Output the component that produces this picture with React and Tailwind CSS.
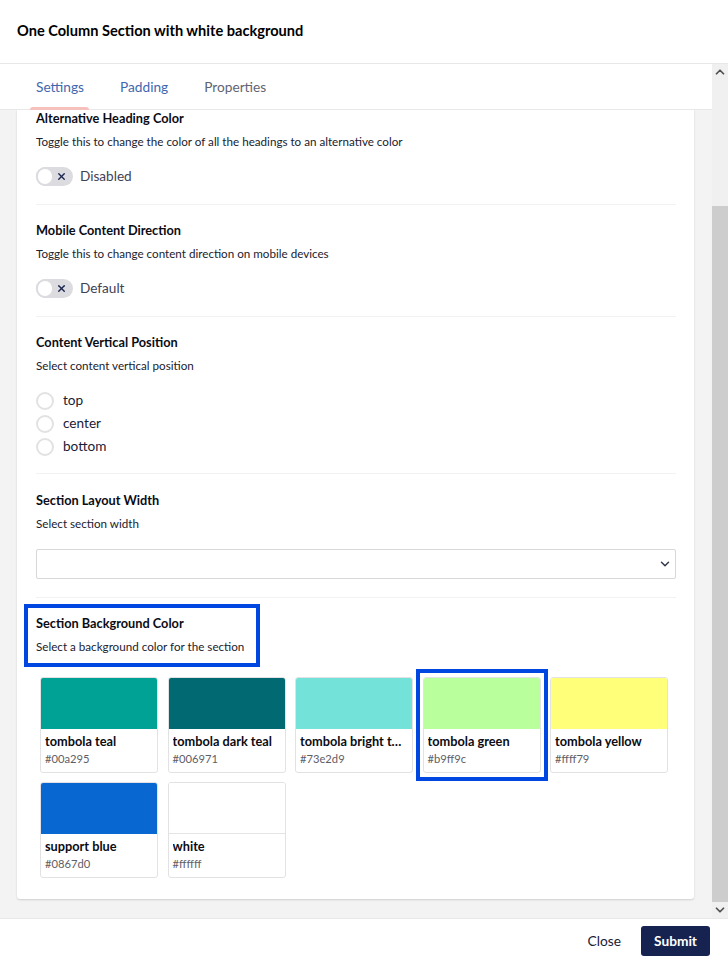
import { ChevronUp, ChevronDown, X } from "lucide-react";

const colors = [
  { name: "tombola teal", hex: "#00a295", swatch: "bg-[#00a295]" },
  { name: "tombola dark teal", hex: "#006971", swatch: "bg-[#006971]" },
  { name: "tombola bright teal", hex: "#73e2d9", swatch: "bg-[#73e2d9]" },
  { name: "tombola green", hex: "#b9ff9c", swatch: "bg-[#b9ff9c]", selected: true },
  { name: "tombola yellow", hex: "#ffff79", swatch: "bg-[#ffff79]" },
  { name: "support blue", hex: "#0867d0", swatch: "bg-[#0867d0]" },
  { name: "white", hex: "#ffffff", swatch: "bg-white border-b border-[#e4e4e7]" },
];

const Toggle = ({ label }) => (
  <div className="flex items-center h-[18px] mt-[16px]">
    <div className="w-[37px] h-[19px] rounded-full bg-[#dcdce0] relative flex items-center justify-end pr-[6px]">
      <div className="absolute left-0 top-0 w-[18px] h-[19px] rounded-full bg-white border-2 border-[#dcdce0]"></div>
      <X size={11} strokeWidth={3} className="text-[#1a2550]" />
    </div>
    <span className="ml-[7px] text-[13.6px] text-[#3f4254]">{label}</span>
  </div>
);

const Heading = ({ title, text }) => (
  <>
    <h3 className="text-[12.75px] leading-[18px] font-bold text-[#0b0c14]">{title}</h3>
    <p className="mt-[6px] text-[11.65px] leading-[18px] text-[#20222e]">{text}</p>
  </>
);

const Radio = ({ label }) => (
  <div className="flex items-center h-[23px]">
    <div className="w-[18px] h-[18px] rounded-full border-2 border-[#e2e2e2] bg-white"></div>
    <span className="ml-[9px] text-[13.6px] text-[#1a2036]">{label}</span>
  </div>
);

const ColorCard = ({ color }) => (
  <div className="relative h-[96px]">
    <div className="h-full rounded-[3px] border border-[#e2e2e4] overflow-hidden bg-white">
      <div className={`h-[51px] ${color.swatch}`}></div>
      <div className="px-[4px] pt-[4px]">
        <div className="text-[12.75px] leading-[17px] font-bold text-[#0b0c14] truncate">{color.name}</div>
        <div className="text-[11.2px] leading-[17px] text-[#5e5e66]">{color.hex}</div>
      </div>
    </div>
    {color.selected && <div className="absolute -inset-x-[7px] -top-[8px] -bottom-[8px] border-4 border-[#0046e0]"></div>}
  </div>
);

export default function App() {
  return (
    <div className="w-[728px] h-[963px] bg-white flex flex-col overflow-hidden font-['Lato','Liberation_Sans',sans-serif]">
      <div className="h-[64px] border-b border-[#e8e8e8] flex items-center px-[17px] pb-[2px] shrink-0">
        <h1 className="text-[14.6px] font-bold text-black">One Column Section with white background</h1>
      </div>

      <div className="flex flex-1 min-h-0">
        <div className="flex-1 min-w-0 flex flex-col">
          <div className="h-[46px] border-b border-[#e8e8e8] flex pl-[30px] shrink-0 text-[13.7px]">
            <div className="relative px-[6px] pt-[13px] w-[59px] text-[#3f68b0]">
              Settings
              <div className="absolute left-0 right-0 bottom-[-1px] h-[3px] rounded-t-[3px] bg-[#f6c0bc]"></div>
            </div>
            <div className="ml-[31px] pt-[13px] text-[#3f68b0]">Padding</div>
            <div className="ml-[36px] pt-[13px] text-[#5f6472]">Properties</div>
          </div>

          <div className="flex-1 min-h-0 bg-[#f4f3f3] pl-[17px] pr-[18px] overflow-hidden">
            <div className="bg-white h-[790px] rounded-b-[3px] shadow-[0_1px_2px_rgba(0,0,0,0.15)] pl-[19px] pr-[18px]">
              <div className="-mt-[1px] h-[96px] border-b border-[#f2f2f2]">
                <Heading title="Alternative Heading Color" text="Toggle this to change the color of all the headings to an alternative color" />
                <Toggle label="Disabled" />
              </div>
              <div className="pt-[16px] h-[112px] border-b border-[#f2f2f2]">
                <Heading title="Mobile Content Direction" text="Toggle this to change content direction on mobile devices" />
                <Toggle label="Default" />
              </div>
              <div className="pt-[16px] h-[157px] border-b border-[#f2f2f2]">
                <Heading title="Content Vertical Position" text="Select content vertical position" />
                <div className="mt-[14px]">
                  <Radio label="top" />
                  <Radio label="center" />
                  <Radio label="bottom" />
                </div>
              </div>
              <div className="pt-[17px] h-[124px] border-b border-[#f2f2f2]">
                <Heading title="Section Layout Width" text="Select section width" />
                <div className="mt-[16px] h-[30px] border border-[#d8d8d8] rounded-[2px] flex items-center justify-end pr-[3px]">
                  <ChevronDown size={14} strokeWidth={2.5} className="text-[#33384a]" />
                </div>
              </div>
              <div className="mt-[6px] -ml-[12px] w-[236px] h-[63px] border-4 border-[#0046e0] pl-[8px] pt-[6px]">
                <Heading title="Section Background Color" text="Select a background color for the section" />
              </div>
              <div className="mt-[10px] ml-[4px] w-[628px] grid grid-cols-5 gap-x-[9.5px] gap-y-[9px]">
                {colors.map((color) => (
                  <ColorCard key={color.name} color={color} />
                ))}
              </div>
            </div>
          </div>
        </div>

        <div className="w-[16px] bg-[#f0f0f0] flex flex-col items-center shrink-0">
          <ChevronUp size={14} strokeWidth={3} className="text-[#505050] h-[16px] shrink-0" />
          <div className="mt-[126px] h-[697px] w-full bg-[#cdcdcd]"></div>
          <ChevronDown size={14} strokeWidth={3} className="text-[#505050] h-[16px] shrink-0" />
        </div>
      </div>

      <div className="h-[45px] border-t border-[#e8e8e8] flex items-center justify-end pr-[18px] shrink-0">
        <span className="text-[13.75px] text-[#1a2036] mr-[20px]">Close</span>
        <button className="w-[69px] h-[30px] rounded-[3px] bg-[#162350] text-white text-[13.7px] font-bold">Submit</button>
      </div>
    </div>
  );
}
